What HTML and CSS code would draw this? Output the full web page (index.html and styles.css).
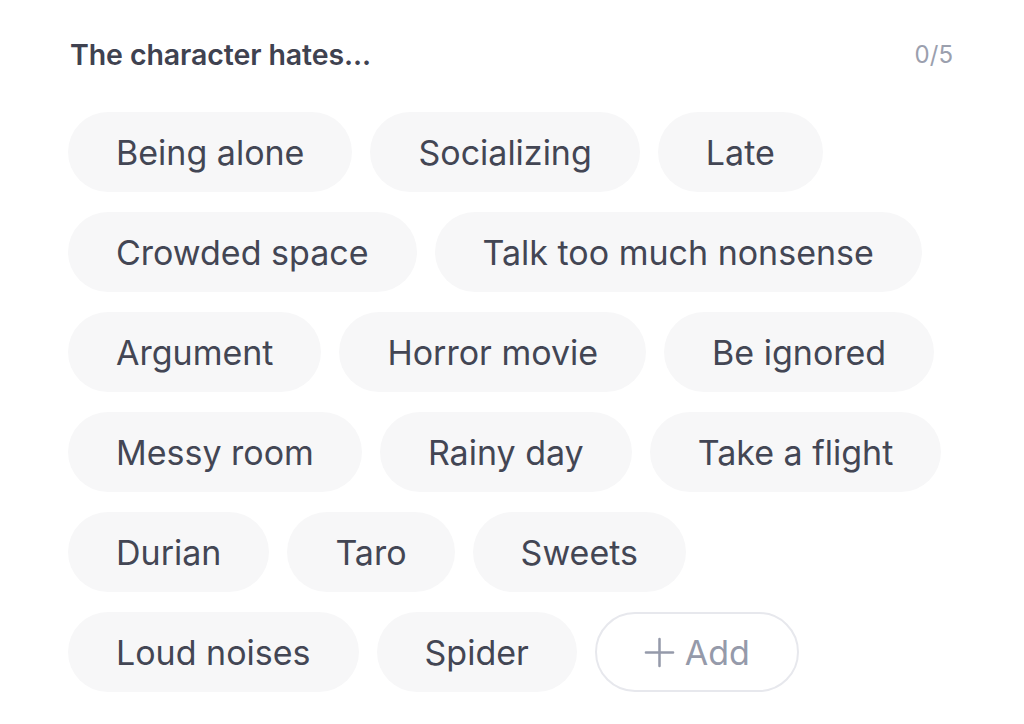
FILE: index.html
```html
<!DOCTYPE html>
<html lang="en">
<head>
<meta charset="utf-8">
<link rel="stylesheet" href="styles.css">
</head>
<body>
<section class="panel">
  <header class="head">
    <h2 class="title">The character hates...</h2>
    <span class="count">0/5</span>
  </header>
  <div class="chips">
    <button class="chip">Being alone</button>
    <button class="chip">Socializing</button>
    <button class="chip">Late</button>
    <button class="chip">Crowded space</button>
    <button class="chip">Talk too much nonsense</button>
    <button class="chip">Argument</button>
    <button class="chip">Horror movie</button>
    <button class="chip">Be ignored</button>
    <button class="chip">Messy room</button>
    <button class="chip">Rainy day</button>
    <button class="chip">Take a flight</button>
    <button class="chip">Durian</button>
    <button class="chip">Taro</button>
    <button class="chip">Sweets</button>
    <button class="chip">Loud noises</button>
    <button class="chip">Spider</button>
    <button class="chip add">
      <svg class="plus" viewBox="0 0 32 32" width="32" height="32" aria-hidden="true">
        <path d="M16 2v28M2 16h28" stroke="currentColor" stroke-width="2.6" stroke-linecap="round" fill="none"/>
      </svg>
      Add
    </button>
  </div>
</section>
</body>
</html>
```

FILE: styles.css
```css
* { box-sizing: border-box; }
html, body { margin: 0; background: #ffffff; }
body {
  font-family: Inter, "Noto Sans", "Liberation Sans", sans-serif;
  color: #434654;
}
.panel {
  width: 1024px;
  padding: 36px 70px 0 68px;
}
.head {
  display: flex;
  justify-content: space-between;
  align-items: center;
  padding-left: 2px;
  height: 36px;
}
.title {
  margin: 0;
  font-size: 28.5px;
  font-weight: 600;
  color: #3f4250;
  letter-spacing: -0.1px;
}
.count {
  font-size: 24px;
  color: #9ba0ae;
  padding-right: 1px;
}
.chips {
  margin-top: 40px;
  display: flex;
  flex-wrap: wrap;
  gap: 20px 18px;
}
.chip {
  height: 80px;
  padding: 0 48px;
  border: 0;
  border-radius: 40px;
  background: #f7f7f8;
  font-family: inherit;
  font-size: 34px;
  font-weight: 400;
  color: #434654;
  display: inline-flex;
  align-items: center;
  gap: 10px;
}
.chip.add {
  background: #ffffff;
  border: 2px solid #e7e8ed;
  color: #959aaa;
  padding: 0 47px;
}
.plus { width: 31px; height: 31px; }
```
